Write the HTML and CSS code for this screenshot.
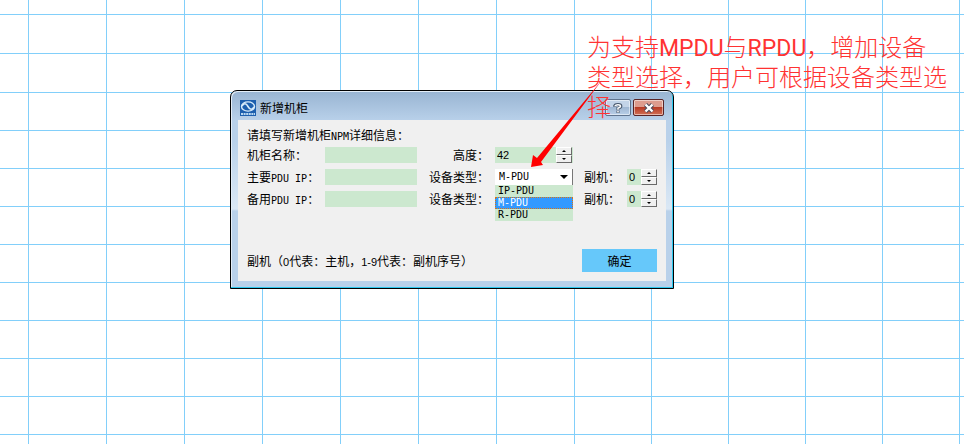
FILE: index.html
```html
<!DOCTYPE html>
<html lang="zh-CN">
<head>
<meta charset="utf-8">
<title>新增机柜</title>
<link rel="stylesheet" href="styles.css">
</head>
<body>
<main class="canvas">
  <svg class="grid-lines" aria-hidden="true"><path d="M28.5 0v2000M106.5 0v2000M184.5 0v2000M262.5 0v2000M340.5 0v2000M418.5 0v2000M496.5 0v2000M574.5 0v2000M651.5 0v2000M728.5 0v2000M805.5 0v2000M882.5 0v2000M959.5 0v2000M0 14.5h4000M0 53.5h4000M0 92.5h4000M0 130.5h4000M0 168.5h4000M0 206.5h4000M0 244.5h4000M0 282.5h4000M0 320.5h4000M0 358.5h4000M0 396.5h4000M0 434.5h4000"/></svg>

  <section class="dialog" role="dialog" aria-labelledby="title">
    <header class="titlebar">
      <svg class="logo" viewBox="0 0 16 16" aria-hidden="true">
        <rect width="16" height="16" fill="#1c5fae"/>
        <ellipse cx="8" cy="6.5" rx="6.5" ry="4.6" fill="none" stroke="#d8ecfb" stroke-width="1.4"/>
        <path d="M2 6C4 3 6 3 8 6.500S12 10 14 7" fill="none" stroke="#d8ecfb" stroke-width="1.6"/>
        <path d="M1 14h14" stroke="#b9d8f2" stroke-width="2" stroke-dasharray="2 .6"/>
      </svg>
      <h1 id="title">新增机柜</h1>
      <button class="caption-button help" type="button" aria-label="帮助"><svg viewBox="0 0 12 12"><path d="M2 4.500V3.500Q2.500 1.800 6 1.800T9.500 4Q9.500 5.200 6 6.200V8.500M6 9V12" fill="none" stroke="#46566b" stroke-width="3.600"/><path d="M2.500 4V3.500Q3 2 6 2T9 4Q9 5.200 6 6.200V8M6 9.300V11.500" fill="none" stroke="#fff" stroke-width="1.900"/></svg></button>
      <button class="caption-button close" type="button" aria-label="关闭"><svg viewBox="0 0 12 12"><path d="M2.500 2.500l7 7M9.500 2.500l-7 7" stroke="#4b4b5c" stroke-width="4.400"/><path d="M2.500 2.500l7 7M9.500 2.500l-7 7" stroke="#fff" stroke-width="2.400"/></svg></button>
    </header>
    <form class="content">
      <p class="intro">请填写新增机柜<span class="latin">NPM</span>详细信息：</p>
      <div class="fields">
        <label for="name">机柜名称：</label>
        <input id="name" type="text">
        <label class="second" for="height">高度：</label>
        <div class="spinner tall">
          <input id="height" type="text" value="42">
          <span class="steps"><button class="up" type="button" aria-label="增加高度"></button><button class="down" type="button" aria-label="减少高度"></button></span>
        </div>

        <label class="main" for="ip1">主要<span class="latin">PDU IP</span>：</label>
        <input id="ip1" type="text">
        <label class="second" for="type1">设备类型：</label>
        <div class="combo">
          <select id="type1"><option>IP-PDU</option><option selected>M-PDU</option><option>R-PDU</option></select>
          <ul class="options" role="listbox" aria-label="设备类型">
            <li role="option">IP-PDU</li>
            <li class="selected" role="option" aria-selected="true">M-PDU</li>
            <li role="option">R-PDU</li>
          </ul>
        </div>
        <label class="third" for="sub1">副机：</label>
        <div class="spinner">
          <input id="sub1" type="text" value="0">
          <span class="steps"><button class="up" type="button" aria-label="增加副机"></button><button class="down" type="button" aria-label="减少副机"></button></span>
        </div>

        <label class="main" for="ip2">备用<span class="latin">PDU IP</span>：</label>
        <input id="ip2" type="text">
        <label class="second" for="type2">设备类型：</label>
        <div class="combo">
          <select id="type2"><option>IP-PDU</option><option selected>M-PDU</option><option>R-PDU</option></select>
        </div>
        <label class="third" for="sub2">副机：</label>
        <div class="spinner">
          <input id="sub2" type="text" value="0">
          <span class="steps"><button class="up" type="button" aria-label="增加副机"></button><button class="down" type="button" aria-label="减少副机"></button></span>
        </div>
      </div>
      <footer class="footer">
        <p>副机（<span class="digits">0</span>代表：主机，<span class="digits">1-9</span>代表：副机序号）</p>
        <button class="confirm" type="submit">确定</button>
      </footer>
    </form>
  </section>

  <p class="note">为支持<span>MPDU</span>与<span>RPDU</span>，增加设备<br>类型选择，用户可根据设备类型选<br>择</p>
  <svg class="arrow" viewBox="0 0 76 92" aria-hidden="true"><path d="M71 4L10 86L12 89L0 91L2 79L6 82Z" fill="#f00"/></svg>
</main>
</body>
</html>
```
FILE: styles.css
```css
* { box-sizing: border-box; }

body {
  margin: 0;
  background: #fff;
  color: #000;
  font: 12px/16px "Noto Sans CJK SC", sans-serif;
}

h1, p, ul { margin: 0; padding: 0; }

button, input, select {
  margin: 0;
  padding: 0;
  border: 0;
  border-radius: 0;
  color: inherit;
  font: inherit;
}

.canvas {
  position: relative;
  min-height: 100vh;
  overflow: hidden;
}

.grid-lines {
  position: absolute;
  inset: 0;
  width: 100%;
  height: 100%;
  fill: none;
  stroke: #82cffa;
}

.dialog {
  position: absolute;
  left: 230px;
  top: 90px;
  width: 444px;
  padding: 0 7px 7px;
  border: 1px solid #000;
  border-radius: 7px 7px 0 0;
  background: linear-gradient(#98b4d2, #b9d1ea 30px, #b9d1ea 50px, #dbe8f5 118px, #b9d1ea 120px);
  box-shadow: inset -1px -1px #2cc8ee, inset 1px 1px #e4eef8;
}

.titlebar {
  display: flex;
  align-items: center;
  height: 29px;
  padding: 4px 2px 0;
}

.logo { width: 16px; height: 16px; }

.titlebar h1 {
  flex: 1;
  margin-left: 4px;
  font-size: 12px;
  font-weight: 400;
}

.caption-button {
  display: flex;
  align-items: center;
  justify-content: center;
  height: 17px;
  border: 1px solid #60748e;
  border-radius: 2px;
  box-shadow: inset 0 0 0 1px #ffffff80;
}

.caption-button svg { width: 12px; height: 12px; }

.help {
  width: 26px;
  margin-right: 2px;
  background: linear-gradient(#c3d4e8 50%, #9fb7d3 50%, #b9d0e8);
}

.help svg { width: 10px; }

.close {
  width: 31px;
  border-color: #592426;
  background: linear-gradient(#dd9c8e 50%, #b83b25 50%, #d17056);
}

.content {
  padding: 7px 9px 9px;
  background: #f0f0f0;
}

.latin, select, .options { font-family: "DejaVu Sans Mono", monospace; font-size: 10px; }
.digits { font-family: "Liberation Sans", sans-serif; font-size: 11px; }
.latin, .digits { line-height: 1; }

.fields {
  display: grid;
  grid-template-columns: 78px 92px 78px 78px 54px 30px;
  grid-auto-rows: 16px;
  row-gap: 6px;
  margin-top: 4px;
}

.fields label { white-space: nowrap; }
.fields .main { grid-column: 1; }
.second { justify-self: end; padding-right: 6px; }
.third { padding-left: 11px; }

.fields input {
  width: 100%;
  min-width: 0;
  height: 16px;
  background: #cce8cf;
}

.spinner { display: flex; background: #cce8cf; }
.spinner.tall { padding-right: 1px; }
.fields .spinner input { flex: 1; padding-left: 2px; background: none; font-family: "Liberation Sans", sans-serif; font-size: 11px; }

.steps { display: flex; flex: none; flex-direction: column; width: 16px; }

.steps button {
  display: flex;
  align-items: center;
  justify-content: center;
  height: 8px;
  border: 1px solid;
  border-color: #fff #696969 #696969 #fff;
  background: #f0f0f0;
}

.steps button::before {
  border: 2px solid transparent;
  content: "";
}

.steps .up::before { border-top: 0; border-bottom-color: #000; }
.steps .down::before { border-bottom: 0; border-top-color: #000; }

.combo { position: relative; }

select {
  display: block;
  width: 100%;
  height: 16px;
  padding-left: 4px;
  appearance: none;
  border-right: 1px solid #777;
  background: #fff url("data:image/svg+xml,%3Csvg xmlns='http://www.w3.org/2000/svg' width='8' height='4'%3E%3Cpath d='M0 0h8L4 4z'/%3E%3C/svg%3E") no-repeat right 4px center;
}

.options {
  position: absolute;
  z-index: 1;
  top: 16px;
  left: 0;
  width: 100%;
  background: #cce8cf;
  line-height: 12px;
  list-style: none;
}

.options li { padding-left: 3px; }

.options .selected {
  outline: 1px dotted #d87513;
  outline-offset: -1px;
  background: #3399ff;
  color: #fff;
}

.footer {
  display: flex;
  align-items: center;
  justify-content: space-between;
  margin-top: 42px;
}

.confirm {
  width: 75px;
  height: 23px;
  background: #66c8fa;
}

.note {
  position: absolute;
  left: 587px;
  top: 31px;
  color: #ff3232;
  font-size: 24px;
  font-weight: 300;
  line-height: 30px;
  white-space: nowrap;
}

.note span {
  font-family: Roboto, sans-serif;
  font-size: 23px;
  font-weight: 400;
  line-height: 1;
}

.arrow {
  position: absolute;
  left: 531px;
  top: 76px;
  width: 76px;
  height: 92px;
}
```
